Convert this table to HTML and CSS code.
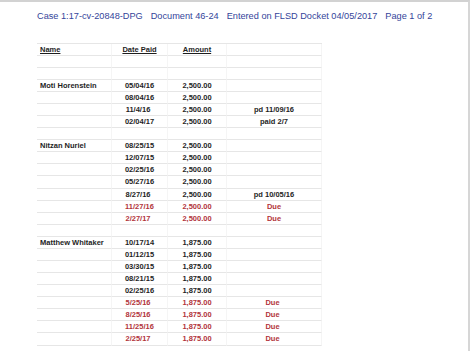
FILE: index.html
```html
<!DOCTYPE html>
<html>
<head>
<meta charset="utf-8">
<link rel="stylesheet" href="styles.css">
</head>
<body>
<div class="page">
  <div class="docket">
    <span>Case 1:17-cv-20848-DPG</span>
    <span>Document 46-24</span>
    <span>Entered on FLSD Docket 04/05/2017</span>
    <span>Page 1 of 2</span>
  </div>
  <div class="sheet">
    <div class="c name head">Name</div><div class="c date head">Date Paid</div><div class="c amt head">Amount</div><div class="c note"></div>

    <div class="c name"></div><div class="c date"></div><div class="c amt"></div><div class="c note"></div>
    <div class="c name"></div><div class="c date"></div><div class="c amt"></div><div class="c note"></div>

    <div class="c name">Moti Horenstein</div><div class="c date">05/04/16</div><div class="c amt">2,500.00</div><div class="c note"></div>
    <div class="c name"></div><div class="c date">08/04/16</div><div class="c amt">2,500.00</div><div class="c note"></div>
    <div class="c name"></div><div class="c date short">11/4/16</div><div class="c amt">2,500.00</div><div class="c note">pd 11/09/16</div>
    <div class="c name"></div><div class="c date">02/04/17</div><div class="c amt">2,500.00</div><div class="c note">paid 2/7</div>

    <div class="c name"></div><div class="c date"></div><div class="c amt"></div><div class="c note"></div>

    <div class="c name">Nitzan Nuriel</div><div class="c date">08/25/15</div><div class="c amt">2,500.00</div><div class="c note"></div>
    <div class="c name"></div><div class="c date">12/07/15</div><div class="c amt">2,500.00</div><div class="c note"></div>
    <div class="c name"></div><div class="c date">02/25/16</div><div class="c amt">2,500.00</div><div class="c note"></div>
    <div class="c name"></div><div class="c date">05/27/16</div><div class="c amt">2,500.00</div><div class="c note"></div>
    <div class="c name"></div><div class="c date short">8/27/16</div><div class="c amt">2,500.00</div><div class="c note">pd 10/05/16</div>
    <div class="c name"></div><div class="c date due">11/27/16</div><div class="c amt due">2,500.00</div><div class="c note due">Due</div>
    <div class="c name"></div><div class="c date short due">2/27/17</div><div class="c amt due">2,500.00</div><div class="c note due">Due</div>

    <div class="c name"></div><div class="c date"></div><div class="c amt"></div><div class="c note"></div>

    <div class="c name">Matthew Whitaker</div><div class="c date">10/17/14</div><div class="c amt">1,875.00</div><div class="c note"></div>
    <div class="c name"></div><div class="c date">01/12/15</div><div class="c amt">1,875.00</div><div class="c note"></div>
    <div class="c name"></div><div class="c date">03/30/15</div><div class="c amt">1,875.00</div><div class="c note"></div>
    <div class="c name"></div><div class="c date">08/21/15</div><div class="c amt">1,875.00</div><div class="c note"></div>
    <div class="c name"></div><div class="c date">02/25/16</div><div class="c amt">1,875.00</div><div class="c note"></div>
    <div class="c name"></div><div class="c date short due">5/25/16</div><div class="c amt due">1,875.00</div><div class="c note due left">Due</div>
    <div class="c name"></div><div class="c date short due">8/25/16</div><div class="c amt due">1,875.00</div><div class="c note due left">Due</div>
    <div class="c name"></div><div class="c date due">11/25/16</div><div class="c amt due">1,875.00</div><div class="c note due left">Due</div>
    <div class="c name"></div><div class="c date short due">2/25/17</div><div class="c amt due">1,875.00</div><div class="c note due left">Due</div>
  </div>
</div>
</body>
</html>
```

FILE: styles.css
```css
html, body {
  margin: 0;
  padding: 0;
  background: #ffffff;
}

.page {
  box-sizing: border-box;
  width: 470px;
  height: 351px;
  border-top: 2px solid #d2d2d2;
  border-right: 2px solid #d6d6d6;
  overflow: hidden;
  font-family: "Liberation Sans", Arial, sans-serif;
}

.docket {
  display: flex;
  gap: 8px;
  padding: 8px 0 0 37px;
  height: 12px;
  line-height: 12px;
  font-size: 9.2px;
  color: #34449a;
  white-space: nowrap;
}

.sheet {
  display: grid;
  grid-template-columns: 75px 56px 59px 95px;
  grid-auto-rows: 12.08px;
  margin: 20.6px 0 0 37px;
  width: 285px;
  border-top: 1px solid #e6e6e6;
  font-size: 7.5px;
  font-weight: bold;
  color: #1e1e1e;
}

.c {
  box-sizing: border-box;
  border-bottom: 1px solid #e6e6e6;
  border-right: 1px solid #f5f5f5;
  line-height: 11px;
  white-space: nowrap;
}

.name {
  padding-left: 3px;
}

.date, .amt, .note {
  text-align: center;
}

.date.short {
  padding-right: 3px;
}

.note.left {
  padding-right: 3px;
}

.head {
  text-decoration: underline;
}

.due {
  color: #b2343b;
}
```
